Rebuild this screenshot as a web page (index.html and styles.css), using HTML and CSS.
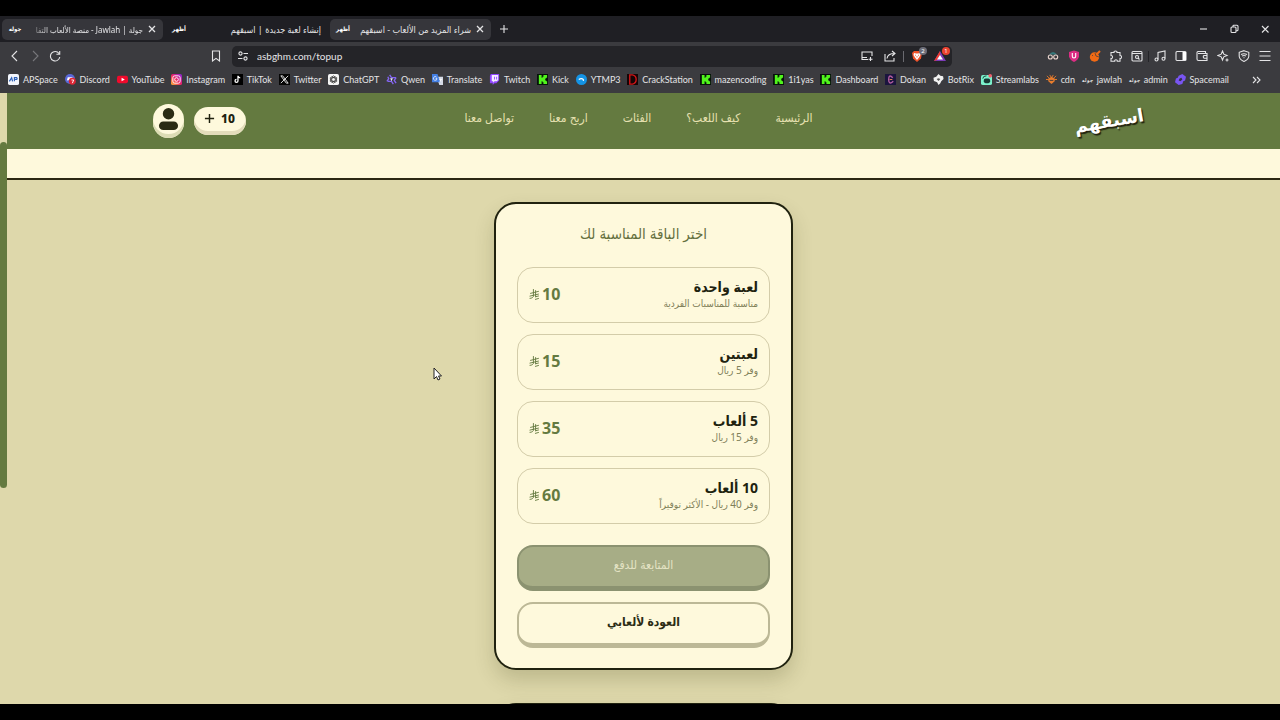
FILE: index.html
```html
<!DOCTYPE html>
<html lang="ar">

<head>
  <meta charset="UTF-8">
  <meta name="viewport" content="width=device-width, initial-scale=1.0">
  <title>شراء المزيد من الألعاب - اسبقهم</title>
  <link rel="stylesheet" href="styles.css">
</head>

<body>
  <svg class="sprite" aria-hidden="true">
    <symbol id="kick" viewBox="0 0 12 12">
      <rect width="12" height="12" fill="#07130a" />
      <path d="M2 1h3v3h1V3h1V1h4v3h-1v1H9v2h1v1h1v3H7V9H6V8H5v3H2z" fill="#50f41c" />
    </symbol>
    <symbol id="close" viewBox="0 0 10 10">
      <path d="M2 2l6 6M8 2l-6 6" fill="none" stroke="currentColor" stroke-width="1.3" />
    </symbol>
    <symbol id="riyal" viewBox="0 0 20 22">
      <path d="M8 2v13c0 2-3 4-7 4M12 4v13M2 10l16-4M1 15l17-4M12 16l6-1.500M11 21l7-2" fill="none" stroke="currentColor" stroke-width="1.7" />
    </symbol>
  </svg>

  <!-- browser -->
  <div class="browser" dir="ltr">
    <div class="tab-strip">
      <button class="tab tab-open" type="button">
        <span class="tab-icon">جوله</span>
        <span class="tab-title tab-fade" dir="rtl">جولة | Jawlah - منصة الألعاب التفا</span>
        <svg class="tab-close"><use href="#close" /></svg>
      </button>
      <button class="tab" type="button">
        <span class="tab-icon">أظهر</span>
        <span class="tab-title" dir="rtl">إنشاء لعبة جديدة | اسبقهم</span>
      </button>
      <button class="tab tab-open" type="button">
        <span class="tab-icon">أظهر</span>
        <span class="tab-title" dir="rtl">شراء المزيد من الألعاب - اسبقهم</span>
        <svg class="tab-close"><use href="#close" /></svg>
      </button>
      <button class="icon-btn" type="button" aria-label="New tab">
        <svg viewBox="0 0 12 12"><path d="M6 2v8M2 6h8" /></svg>
      </button>
      <div class="window-controls">
        <button class="icon-btn" type="button" aria-label="Minimize"><svg viewBox="0 0 12 12"><path d="M3 6h7" /></svg></button>
        <button class="icon-btn" type="button" aria-label="Restore"><svg viewBox="0 0 12 12"><rect x="3" y="4" width="5" height="5.500" rx="1" /><path d="M5 4V3q0-.8.8-.8H9q1 0 1 1v3.600q0 1-1 1H8" /></svg></button>
        <button class="icon-btn" type="button" aria-label="Close"><svg viewBox="0 0 12 12"><path d="M3 3l6.500 6.500M9.500 3L3 9.500" /></svg></button>
      </div>
    </div>

    <div class="toolbar">
      <div class="nav-buttons">
        <button class="icon-btn" type="button" aria-label="Back"><svg viewBox="0 0 12 12"><path d="M8 1L3 6l5 5" /></svg></button>
        <button class="icon-btn dim" type="button" aria-label="Forward"><svg viewBox="0 0 12 12"><path d="M4 1l5 5-5 5" /></svg></button>
        <button class="icon-btn" type="button" aria-label="Reload"><svg viewBox="0 0 12 12"><path d="M10 3.500A4.700 4.700 0 1 0 10.800 7M10.700 1v3.300H7.400" /></svg></button>
        <button class="icon-btn bookmark-btn" type="button" aria-label="Bookmark"><svg viewBox="0 0 12 12"><path d="M2.500 1h7v10L6 8.400 2.500 11z" /></svg></button>
      </div>
      <div class="address">
        <svg viewBox="0 0 12 12"><circle cx="3.500" cy="3.500" r="1.600" /><circle cx="8.500" cy="8.500" r="1.600" /><path d="M6.500 3.500H11M1 8.500h4.500" /></svg>
        <input type="text" aria-label="Address" value="asbghm.com/topup">
        <button class="icon-btn" type="button" aria-label="Install"><svg viewBox="0 0 12 12"><path d="M7 9.500H1V2h10v4M1 7.500h5M9.500 7v4M7.500 9.200h4" /></svg></button>
        <button class="icon-btn" type="button" aria-label="Share"><svg viewBox="0 0 12 12"><path d="M1 4v7h9V8M3 8.500C3.500 5 6 3.500 10.500 3.500M8 1l3 2.500L8 6" /></svg></button>
        <span class="divider"></span>
        <button class="icon-btn shield" type="button" aria-label="Shields">
          <svg viewBox="0 0 12 12"><path d="M3 1h6l2 2-1 5.500L6 12 2 8.500 1 3z" fill="#f0532b" stroke="none" /><path d="M3 3l2 .5h2L9 3l.5 2-1.500 2.500L6 10 4 7.500 2.500 5z" fill="#fff" stroke="none" /><path d="M4 5l1 .5M8 5l-1 .5M6 6v1.500" stroke="#f0532b" stroke-width=".8" /></svg>
          <span class="badge">2</span>
        </button>
        <button class="icon-btn shield" type="button" aria-label="Rewards">
          <svg viewBox="0 0 12 12"><path d="M6 1l6 10H0z" fill="#7b3bb8" stroke="none" /><path d="M6 1L0 11l3-1 3-5z" fill="#ee3c2e" stroke="none" /><path d="M6 5l3 4.500H3z" fill="#fff" stroke="none" /></svg>
          <span class="badge badge-red">1</span>
        </button>
      </div>
      <div class="extensions">
        <button class="icon-btn" type="button" aria-label="Incognito"><svg viewBox="0 0 12 12"><path d="M2 4.500Q6-.5 10 4.500z" fill="#35797b" stroke="none" /><circle cx="3.300" cy="7" r="2" stroke="#e9d4cd" /><circle cx="8.700" cy="7" r="2" stroke="#e9d4cd" /></svg></button>
        <button class="icon-btn" type="button" aria-label="Shield"><svg viewBox="0 0 12 12"><path d="M6 .5l5 1.500v4.500Q10 10 6 12 2 10 1 6.500V2z" fill="#dc2d84" stroke="none" /><path d="M4.300 3v3.300q0 1.700 1.700 1.700t1.700-1.700V3" stroke="#fff" /></svg></button>
        <button class="icon-btn" type="button" aria-label="Cookies"><svg viewBox="0 0 12 12"><circle cx="5.500" cy="7" r="4.700" fill="#f26a14" stroke="none" /><path d="M7 5l4-4M4 5l3 3" stroke="#f26a14" stroke-width="2" /><path d="M3 5l1 1M6 3l1 3 3 1" stroke="#3b3b3f" stroke-width=".7" /></svg></button>
        <button class="icon-btn" type="button" aria-label="Extensions"><svg viewBox="0 0 12 12"><path d="M1 2.500h3C3.500.5 7.500.5 7 2.500h3v3c2-.5 2 3.500 0 3v2.700H7.300c.3-2-3-2-2.600 0H1V8.500c2 .4 2-3.300 0-3z" /></svg></button>
        <button class="icon-btn" type="button" aria-label="Search tabs"><svg viewBox="0 0 12 12"><rect x="1" y="1.500" width="10" height="9.500" rx="1" /><path d="M1 3.500h10M7 8l1.500 1.500" /><circle cx="6" cy="7" r="1.500" /></svg></button>
        <span class="divider divider-dark"></span>
        <button class="icon-btn" type="button" aria-label="Media"><svg viewBox="0 0 12 12"><path d="M4 9.500V2.500L11 1v7.500" /><circle cx="2.500" cy="9.500" r="1.500" /><circle cx="9.500" cy="8.700" r="1.500" /></svg></button>
        <button class="icon-btn" type="button" aria-label="Sidebar"><svg viewBox="0 0 12 12"><rect x="1" y="1.500" width="10" height="9" rx="1" /><path d="M7.500 2H11v8H7.500z" fill="#fff" stroke="none" /></svg></button>
        <button class="icon-btn" type="button" aria-label="Wallet"><svg viewBox="0 0 12 12"><path d="M9.500 3.500V1.500H2q-1 0-1 1V9q0 1.500 1.500 1.500H11v-7H2M11 5.500H8q-1.500 1.300 0 2.700h3" /></svg></button>
        <button class="icon-btn" type="button" aria-label="Assistant"><svg viewBox="0 0 12 12"><path d="M5.500 1l1.300 3.200L10 5.500 6.800 6.800 5.500 10 4.200 6.800 1 5.500l3.200-1.300zM10 8.500v3M8.500 10h3" /></svg></button>
        <button class="icon-btn" type="button" aria-label="VPN"><svg viewBox="0 0 12 12"><path d="M6 .7l4.800 1.600v4Q10.500 9.500 6 11.500 1.500 9.500 1.200 6.300v-4zM3 4.500q3-1.500 6 0M4 6q2-1 4 0M5.500 7.700h1" /></svg></button>
        <button class="icon-btn" type="button" aria-label="Menu"><svg viewBox="0 0 12 12"><path d="M.5 1.500h11M.5 6h11M.5 10.500h11" /></svg></button>
      </div>
    </div>

    <div class="bookmarks">
      <ul>
        <li><a href="#"><svg viewBox="0 0 12 12"><rect width="12" height="12" rx="2" fill="#f3f6fd" /><path d="M1.500 8l2.500-4 1 4M7 8V4h2.500q1 1-.2 2H7" fill="none" stroke="#2e62b9" stroke-width="1.300" /></svg>APSpace</a></li>
        <li><a href="#"><svg viewBox="0 0 12 12"><circle cx="5.500" cy="5.500" r="5.500" fill="#5a68d8" /><path d="M2 7l1-3.500h5L9 6" fill="#fff" /><circle cx="8" cy="8" r="3.800" fill="#dd2434" /><path d="M7 6.500h2.500L8 10" fill="none" stroke="#fff" /></svg>Discord</a></li>
        <li><a href="#"><svg viewBox="0 0 12 12"><rect y="2" width="12" height="8" rx="2" fill="#f00a2c" /><path d="M5 4l3.500 2L5 8z" fill="#fff" /></svg>YouTube</a></li>
        <li><a href="#"><svg viewBox="0 0 12 12"><defs><linearGradient id="insta" x1="0" y1="1" x2="1" y2="0"><stop offset="0" stop-color="#fcb72f" /><stop offset=".5" stop-color="#ea1f68" /><stop offset="1" stop-color="#8427e0" /></linearGradient></defs><rect width="12" height="12" rx="2" fill="url(#insta)" /><rect x="2" y="2" width="8" height="8" rx="2" fill="none" stroke="#fff" /><circle cx="6" cy="6" r="2" fill="none" stroke="#fff" /></svg>Instagram</a></li>
        <li><a href="#"><svg viewBox="0 0 12 12"><rect width="12" height="12" fill="#000" /><path d="M6.500 2v5.500a1.600 1.600 0 1 1-1.600-1.600M6.500 2q.5 2 2.500 2.200" fill="none" stroke="#fff" stroke-width="1.400" /></svg>TikTok</a></li>
        <li><a href="#"><svg viewBox="0 0 12 12"><rect width="12" height="12" fill="#050505" /><path d="M2 2h2l6 8H8zM10 2L2 10" fill="none" stroke="#fff" stroke-width=".9" /></svg>Twitter</a></li>
        <li><a href="#"><svg viewBox="0 0 12 12"><rect width="12" height="12" rx="2" fill="#f4f4f4" /><g fill="none" stroke="#333" stroke-width=".8"><ellipse cx="6" cy="6" rx="2" ry="4" /><ellipse cx="6" cy="6" rx="2" ry="4" transform="rotate(60 6 6)" /><ellipse cx="6" cy="6" rx="2" ry="4" transform="rotate(120 6 6)" /></g></svg>ChatGPT</a></li>
        <li><a href="#"><svg viewBox="0 0 12 12"><g fill="none" stroke="#8465f2" stroke-width="1.500"><path d="M4 1l2 3h5M11 4L9 7l2 3M8 11l-2-3H2M1 8l2-3-1-2" /></g><path d="M4.500 4.500h3L6 8z" fill="#e6e0ff" /></svg>Qwen</a></li>
        <li><a href="#"><svg viewBox="0 0 12 12"><path d="M5 3h7v9H8z" fill="#d5dae5" /><path d="M0 0h6l3 9H0z" fill="#437fe4" /><path d="M5 3.500A2 2 0 1 0 5.500 5H4M8 6h3M9.500 5v1q0 2-1.500 3" fill="none" stroke="#fff" stroke-width=".8" /></svg>Translate</a></li>
        <li><a href="#"><svg viewBox="0 0 12 12"><path d="M2 0h9v7L8 10H6l-2 2v-2H1V2z" fill="#9146ff" /><path d="M3 1h7v5.500L8.500 8H6L4.500 9.500V8H3z" fill="#f4ecff" /><path d="M6 3v3M8.300 3v3" stroke="#9146ff" /></svg>Twitch</a></li>
        <li><a href="#"><svg><use href="#kick" /></svg>Kick</a></li>
        <li><a href="#"><svg viewBox="0 0 12 12"><circle cx="6" cy="6" r="6" fill="#1493e5" /><path d="M3 6q3-2 5 0v1.500" fill="none" stroke="#fff" stroke-width="1.200" /></svg>YTMP3</a></li>
        <li><a href="#"><svg viewBox="0 0 12 12"><rect width="12" height="12" fill="#160506" /><path d="M3 1h3q4 1 4 5t-4 5H3z" fill="none" stroke="#cf1518" stroke-width="1.500" /></svg>CrackStation</a></li>
        <li><a href="#"><svg><use href="#kick" /></svg>mazencoding</a></li>
        <li><a href="#"><svg><use href="#kick" /></svg>1i1yas</a></li>
        <li><a href="#"><svg><use href="#kick" /></svg>Dashboard</a></li>
        <li><a href="#"><svg viewBox="0 0 12 12"><rect width="12" height="12" fill="#1b153e" /><path d="M8.500 4Q4-.5 4 6t5 2" fill="none" stroke="#b45ca3" stroke-width="1.500" /><path d="M5 6h3" stroke="#ed8c57" /></svg>Dokan</a></li>
        <li><a href="#"><svg viewBox="0 0 12 12"><path d="M6 0l2 2 3 .5.500 3L9 8l-1 2-2 2-1.500-3L1 7.500.5 4l3-1z" fill="#f2f2f2" /><path d="M4 5.500l2-1 2 1-2 2z" fill="#555" /></svg>BotRix</a></li>
        <li><a href="#"><svg viewBox="0 0 12 12"><rect y="1" width="12" height="11" rx="2" fill="#7cf2cd" /><rect x="3" y="5" width="7" height="5" rx="2" fill="#183a35" /><path d="M2 5q0-3 4-3" fill="none" stroke="#183a35" /><circle cx="10" cy="2" r="2" fill="#f05c6a" /></svg>Streamlabs</a></li>
        <li><a href="#"><svg viewBox="0 0 12 12"><path d="M6 3l3.500 2v3L6 11 2.500 8V5z" fill="#e77c2d" /><path d="M1 2l3 3M11 2L8 5M0 6h3M9 6h3M4 1l2 3 2-3" stroke="#e77c2d" fill="none" /><path d="M4 7h4" stroke="#3b3b3f" /></svg>cdn</a></li>
        <li><a href="#"><span class="word-icon">جوله</span>jawlah</a></li>
        <li><a href="#"><span class="word-icon">جوله</span>admin</a></li>
        <li><a href="#"><svg viewBox="0 0 12 12"><path d="M4 2l4-2 4 3-1 4-2 1-1 3-4 1-4-3 1-4 2-1z" fill="#7955f2" /><path d="M5 5l2-1 1 2-2 2-2-1z" fill="#35304a" /></svg>Spacemail</a></li>
      </ul>
      <button class="icon-btn" type="button" aria-label="More bookmarks"><svg viewBox="0 0 12 12"><path d="M3 3l3 3-3 3M7 3l3 3-3 3" /></svg></button>
    </div>
  </div>

  <!-- page -->
  <div class="viewport" dir="rtl">
    <div class="site">
      <header class="site-header">
        <div class="header-inner">
          <a class="logo" href="#">اسبقهم</a>
          <nav>
            <a href="#">الرئيسية</a>
            <a href="#">كيف اللعب؟</a>
            <a href="#">الفئات</a>
            <a href="#">اربح معنا</a>
            <a href="#">تواصل معنا</a>
          </nav>
          <div class="account">
            <button class="balance" type="button">10
              <svg viewBox="0 0 12 12"><path d="M6 1v10M1 6h10" /></svg>
            </button>
            <button class="avatar" type="button" aria-label="الحساب">
              <svg viewBox="0 0 22 24"><circle cx="11" cy="6" r="6" /><rect x="1" y="14" width="20" height="9" rx="4.500" /></svg>
            </button>
          </div>
        </div>
      </header>
      <div class="strip"></div>

      <main>
        <section class="card">
          <h1>اختر الباقة المناسبة لك</h1>
          <div class="packages">
            <button class="package" type="button">
              <span class="info"><strong>لعبة واحدة</strong><small>مناسبة للمناسبات الفردية</small></span>
              <span class="price">10<svg><use href="#riyal" /></svg></span>
            </button>
            <button class="package" type="button">
              <span class="info"><strong>لعبتين</strong><small>وفر 5 ريال</small></span>
              <span class="price">15<svg><use href="#riyal" /></svg></span>
            </button>
            <button class="package" type="button">
              <span class="info"><strong>5 ألعاب</strong><small>وفر 15 ريال</small></span>
              <span class="price">35<svg><use href="#riyal" /></svg></span>
            </button>
            <button class="package" type="button">
              <span class="info"><strong>10 ألعاب</strong><small>وفر 40 ريال - الأكثر توفيراً</small></span>
              <span class="price">60<svg><use href="#riyal" /></svg></span>
            </button>
          </div>
          <div class="actions">
            <button class="btn btn-pay" type="submit" disabled>المتابعة للدفع</button>
            <a class="btn btn-back" href="#">العودة لألعابي</a>
          </div>
        </section>
        <section class="card card-next"></section>
      </main>
    </div>
    <div class="scrollbar"><div class="thumb"></div></div>
  </div>

  <svg class="cursor" viewBox="0 0 9 14"><path d="M1 1v11l2.500-2.500L5 13l2-1-1.500-3H8.500z" fill="#fff" stroke="#222" /></svg>
</body>

</html>
```
FILE: styles.css
```css
* {
  box-sizing: border-box;
}

body {
  display: flex;
  flex-direction: column;
  height: 100vh;
  margin: 0;
  padding: 16px 0;
  overflow: hidden;
  background-color: #000;
  font-family: "Noto Sans", "DejaVu Sans Condensed", "DejaVu Sans", sans-serif;
}

button,
input {
  font-family: inherit;
  border: none;
  padding: 0;
  background: none;
  color: inherit;
}

a {
  color: inherit;
  text-decoration: none;
}

.sprite {
  display: none;
}

/* browser */
.browser {
  flex: none;
  background-color: #3b3b3f;
  color: #e4e4e6;
}

.tab-strip {
  display: flex;
  align-items: center;
  gap: 3px;
  height: 26px;
  padding: 0 2px;
  background-color: #1f1f24;
}

.tab {
  display: flex;
  align-items: center;
  gap: 4px;
  width: 161px;
  height: 21px;
  padding: 0 6px;
  border-radius: 5px;
  font-size: 9px;
}

.tab-open {
  background-color: #36363b;
}

.tab-icon {
  flex: none;
  width: 14px;
  font-size: 6px;
  font-weight: bold;
  color: #fff;
}

.tab-title {
  flex: 1;
  white-space: nowrap;
  text-align: right;
}

.tab-fade {
  font-size: 8px;
  mask-image: linear-gradient(to right, transparent, #000 24px);
}

.tab-close {
  flex: none;
  width: 10px;
  height: 10px;
}

.icon-btn {
  display: flex;
  align-items: center;
  justify-content: center;
  flex: none;
  width: 20px;
  height: 20px;
}

.icon-btn svg,
.address > svg {
  flex: none;
  width: 12px;
  height: 12px;
  fill: none;
  stroke: currentColor;
  stroke-width: 1.1;
}

.dim {
  color: #77777b;
}

.window-controls {
  display: flex;
  gap: 11px;
  margin-left: auto;
  padding-right: 3px;
}

.toolbar {
  display: flex;
  align-items: center;
  height: 28px;
  padding: 0 5px;
}

.nav-buttons {
  display: flex;
  width: 227px;
  padding-right: 6px;
}

.bookmark-btn {
  margin-left: auto;
}

.address {
  display: flex;
  flex: 1;
  align-items: center;
  gap: 3px;
  height: 21px;
  padding: 0 2px 0 5px;
  border-radius: 5px;
  background-color: #242428;
}

.address input {
  flex: 1;
  min-width: 0;
  padding-left: 5px;
  font-family: Lato, "Noto Sans", sans-serif;
  font-size: 10px;
}

.divider {
  width: 1px;
  height: 11px;
  background-color: #6a6a70;
}

.divider-dark {
  background-color: #242428;
}

.shield {
  position: relative;
}

.badge {
  position: absolute;
  top: 1px;
  right: 0;
  width: 8px;
  border-radius: 4px;
  background-color: #6c6d78;
  color: #fff;
  font-size: 6px;
  line-height: 8px;
  text-align: center;
}

.badge-red {
  background-color: #ea4230;
}

.extensions {
  display: flex;
  align-items: center;
  justify-content: space-between;
  width: 232px;
  margin-left: 91px;
}

.bookmarks {
  display: flex;
  align-items: center;
  height: 23px;
  padding: 0 14px 4px 8px;
}

.bookmarks ul {
  display: flex;
  flex: 1;
  justify-content: space-between;
  margin: 0 17px 0 0;
  padding: 0;
  list-style: none;
}

.bookmarks a {
  display: flex;
  align-items: center;
  gap: 4px;
  font-family: Lato, "Noto Sans", sans-serif;
  font-size: 9px;
  line-height: 12px;
  white-space: nowrap;
}

.bookmarks li svg {
  width: 11px;
  height: 11px;
}

.word-icon {
  font-size: 5px;
  font-weight: bold;
}

/* page */
.viewport {
  display: flex;
  flex: 1;
  min-height: 0;
  overflow: hidden;
  background-color: #ded8ab;
  color: #20220f;
}

.site {
  flex: 1;
}

.scrollbar {
  width: 7px;
  padding-top: 49px;
}

.thumb {
  height: 346px;
  border-radius: 4px;
  background-color: #647a40;
}

.site-header {
  background-color: #647a40;
}

.header-inner {
  display: grid;
  grid-template-columns: 1fr auto 1fr;
  align-items: center;
  max-width: 1002px;
  height: 56px;
  margin: 0 auto;
  padding-left: 10px;
}

.logo {
  justify-self: start;
  color: #fff;
  font-family: "DejaVu Sans", sans-serif;
  font-size: 18px;
  font-weight: bold;
  line-height: 30px;
  text-shadow: 1px 2px 1px #20220f;
  transform: rotate(-10deg);
}

nav {
  display: flex;
  gap: 35px;
  padding: 0 20px 8px 0;
  color: #e6e0b0;
  font-size: 12px;
}

.account {
  display: flex;
  align-items: center;
  justify-self: end;
  gap: 10px;
}

.balance {
  display: flex;
  align-items: center;
  justify-content: center;
  gap: 6px;
  width: 52px;
  height: 28px;
  padding-bottom: 6px;
  border-radius: 14px;
  background-color: #fef9dc;
  box-shadow: inset 0 -4px #e3dcbb;
  font-size: 12px;
  font-weight: 800;
}

.balance svg {
  width: 11px;
  height: 11px;
  fill: none;
  stroke: #20220f;
  stroke-width: 1.6;
}

.avatar {
  width: 31px;
  height: 34px;
  padding-bottom: 4px;
  border-radius: 16px;
  background-color: #fef9dc;
  box-shadow: inset 0 -4px #dcdcb4;
}

.avatar svg {
  display: block;
  width: 21px;
  height: 23px;
  margin: 0 auto;
  fill: #2b2c14;
}

.strip {
  height: 31px;
  border-bottom: 2px solid #2c2812;
  background-color: #fef9dc;
}

main {
  display: flex;
  flex-direction: column;
  align-items: center;
  gap: 33px;
  padding-top: 22px;
}

.card {
  width: 100%;
  max-width: 299px;
  padding: 16px 21px 20px;
  border: 2px solid #20220f;
  border-radius: 22px;
  background-color: #fef9dc;
  box-shadow: 0 10px 20px rgba(60, 60, 20, 0.2);
}

.card-next {
  height: 60px;
}

.card h1 {
  margin: 0 0 20px;
  color: #65703f;
  font-size: 15px;
  font-weight: normal;
  line-height: 27px;
  text-align: center;
}

.packages,
.actions {
  display: flex;
  flex-direction: column;
  gap: 11px;
}

.package {
  display: flex;
  align-items: center;
  justify-content: space-between;
  height: 56px;
  padding: 0 11px 3px;
  border: 1px solid #d3cca9;
  border-radius: 16px;
  text-align: right;
}

.info {
  display: flex;
  flex-direction: column;
}

.info strong {
  font-size: 14px;
  line-height: 18px;
}

.info small {
  color: #808059;
  font-size: 10px;
  line-height: 14px;
}

.price {
  display: flex;
  align-items: center;
  gap: 2px;
  color: #647a40;
  font-size: 16px;
  font-weight: bold;
}

.price svg {
  width: 11px;
  height: 12px;
}

.actions {
  margin-top: 21px;
}

.btn {
  display: flex;
  align-items: center;
  justify-content: center;
  height: 46px;
  padding-bottom: 4px;
  border: 2px solid #bcb896;
  border-bottom-width: 5px;
  border-radius: 16px;
  color: #2b2c14;
  font-size: 12px;
  font-weight: 600;
}

.btn-pay {
  border-color: #8b9270;
  background-color: #a7ad86;
  color: #e4e3c4;
  font-weight: 500;
}

.cursor {
  position: absolute;
  top: 367px;
  left: 433px;
  width: 9px;
  height: 14px;
}
```
